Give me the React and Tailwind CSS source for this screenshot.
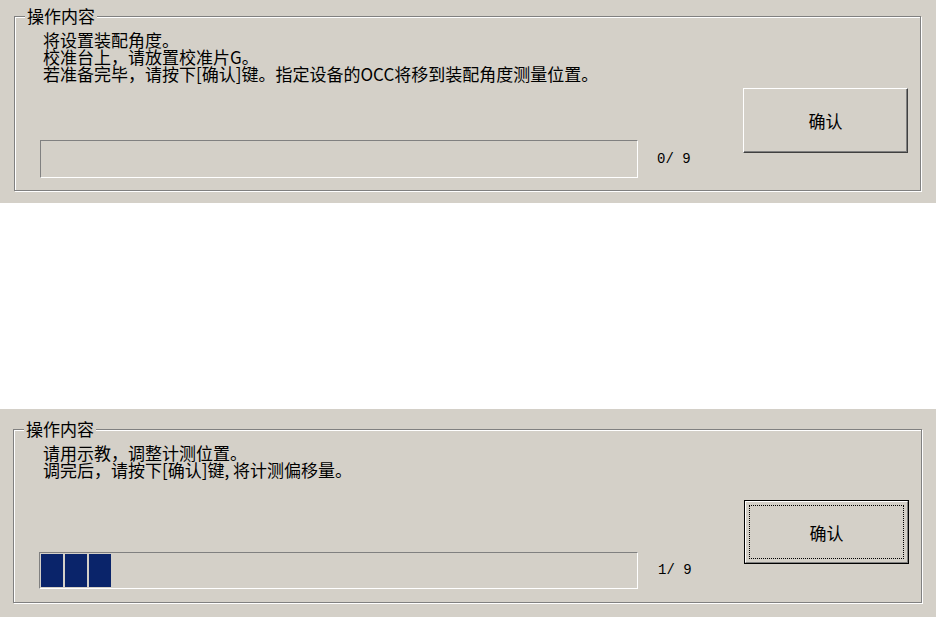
const cjk = "[font-family:'Noto_Sans_CJK_SC','Noto_Sans_CJK_JP',sans-serif]";

function GroupTitle() {
  return (
    <span
      className={`absolute left-[10px] top-[-10px] bg-[#d4d0c8] px-[2px] text-[17px] leading-[17px] text-black ${cjk}`}
    >
      操作内容
    </span>
  );
}

function ProgressBar({ width, height, blocks }) {
  return (
    <div
      className="flex gap-[2px] border border-t-[#808080] border-l-[#808080] border-b-white border-r-white p-[1px]"
      style={{ width, height }}
    >
      {Array.from({ length: blocks }).map((_, i) => (
        <div key={i} className="h-full w-[22px] bg-[#0a246a]" />
      ))}
    </div>
  );
}

export default function App() {
  return (
    <div className="flex h-[617px] w-[936px] flex-col bg-white">
      {/* Step 0 */}
      <div className="h-[203px] bg-[#d4d0c8] pt-[16px]">
        <div className="relative ml-[14px] h-[175px] w-[907px] border border-[#808080] shadow-[inset_1px_1px_0_#fff,1px_1px_0_#fff]">
          <GroupTitle />
          <div className="flex">
            <div className="pl-[25px] pt-[14px]">
              <div className={`ml-[3px] text-[17px] leading-[17px] text-black ${cjk}`}>
                <p>将设置装配角度。</p>
                <p>校准台上，请放置校准片G。</p>
                <p>若准备完毕，请按下[确认]键。指定设备的OCC将移到装配角度测量位置。</p>
              </div>
              <div className="mt-[58px] flex items-center">
                <ProgressBar width={598} height={38} blocks={0} />
                <span className="ml-[19px] whitespace-pre font-['Liberation_Mono',monospace] text-[14px] text-black">
                  0/ 9
                </span>
              </div>
            </div>
            <button
              className={`ml-auto mr-[12px] mt-[71px] h-[65px] w-[165px] border border-t-white border-l-white border-b-[#404040] border-r-[#404040] bg-[#d4d0c8] text-[17px] leading-[17px] text-black shadow-[inset_-1px_-1px_0_#808080] ${cjk}`}
            >
              确认
            </button>
          </div>
        </div>
      </div>

      <div className="h-[206px]" />

      {/* Step 1 */}
      <div className="h-[208px] bg-[#d4d0c8] pt-[20px]">
        <div className="relative ml-[13px] h-[174px] w-[909px] border border-[#808080] shadow-[inset_1px_1px_0_#fff,1px_1px_0_#fff]">
          <GroupTitle />
          <div className="flex">
            <div className="pl-[25px] pt-[14px]">
              <div className={`ml-[4px] text-[17px] leading-[17px] text-black ${cjk}`}>
                <p>请用示教，调整计测位置。</p>
                <p>调完后，请按下[确认]键, 将计测偏移量。</p>
              </div>
              <div className="mt-[74px] flex items-center">
                <ProgressBar width={599} height={37} blocks={3} />
                <span className="ml-[20px] whitespace-pre font-['Liberation_Mono',monospace] text-[14px] text-black">
                  1/ 9
                </span>
              </div>
            </div>
            <button className="ml-auto mr-[12px] mt-[70px] h-[64px] w-[165px] border border-black bg-[#d4d0c8] p-0">
              <div className="flex h-full w-full border border-t-white border-l-white border-b-[#808080] border-r-[#808080] p-[3px]">
                <div
                  className={`flex flex-1 items-center justify-center border border-dotted border-black text-[17px] leading-[17px] text-black ${cjk}`}
                >
                  确认
                </div>
              </div>
            </button>
          </div>
        </div>
      </div>
    </div>
  );
}
